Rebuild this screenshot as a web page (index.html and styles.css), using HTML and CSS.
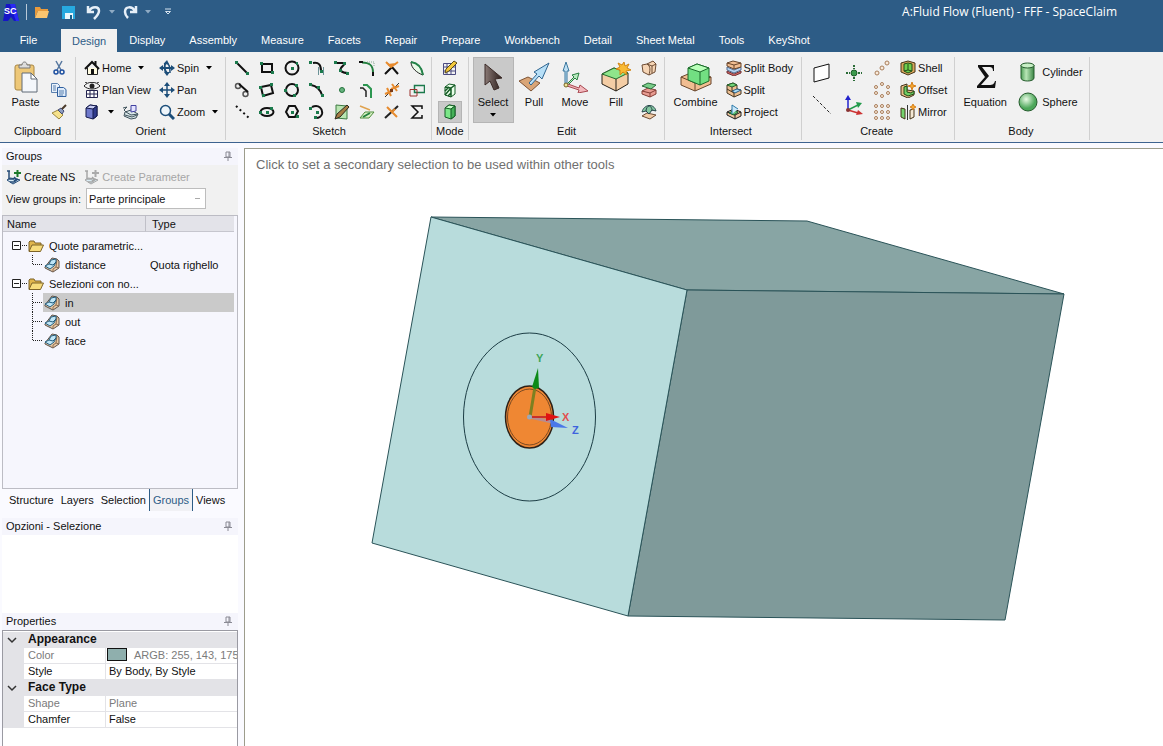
FILE: index.html
```html
<!DOCTYPE html>
<html lang="en">
<head>
  <meta charset="UTF-8">
  <meta name="viewport" content="width=device-width, initial-scale=1.0">
  <title>A:Fluid Flow (Fluent) - FFF - SpaceClaim</title>
  <link rel="stylesheet" href="styles.css">
</head>
<body>

<!-- Shared symbols -->
<svg class="sprite" aria-hidden="true">
  <symbol id="folder" viewBox="0 0 16 16">
    <path d="M1 13V4l1-1h4l1 2h6v2" fill="#e0b54b" stroke="#7d6328"/>
    <path d="M1 13.500 4 7h11.500l-3 6.500z" fill="#f7dc7c" stroke="#7d6328"/>
  </symbol>
  <symbol id="item" viewBox="0 0 16 16">
    <path d="M1 10 8 1l5 1 2 2v7l-6 4-8-4z" fill="#e9c9a4" stroke="#5d534c"/>
    <path d="m13 2-1 8 3 1M9 15v-3l3-2" fill="none" stroke="#8d6d52"/>
    <path d="m1 9 4-2 2-4 5-1v3l-2 4-4 3z" fill="#bfe6f7" stroke="#235d7e"/>
    <path d="m5 7 4 1 3-3" fill="none" stroke="#235d7e"/>
  </symbol>
  <symbol id="pin" viewBox="0 0 8 10">
    <path d="M2 1h4v5H2zM5 1v5M0 6.500h8M4 7v3" fill="none" stroke="#8a8a94"/>
  </symbol>
  <symbol id="down" viewBox="0 0 6 4"><path d="M0 0h6L3 3.500z"/></symbol>
  <symbol id="create" viewBox="0 0 16 16">
    <path d="m1 11 3-2 7 1 3 1-7 4z" fill="#d9ecf5" stroke="currentColor"/>
    <path d="M1 2h3M3 2v8h5M8 8l2 2-2 2M4 13h4l4-3" fill="none" stroke="currentColor" stroke-width="1.500"/>
  </symbol>
  <symbol id="twist" viewBox="0 0 10 8"><path d="m1 2 4 4 4-4" fill="none" stroke="#333" stroke-width="1.500"/></symbol>
</svg>

<header class="titlebar">
  <div class="quick">
    <svg class="logo" viewBox="0 0 16 18" width="16" height="18">
      <path d="M3 1h9l4 17h-5l-3-4-3 4H0z" fill="#1515c8"/>
      <path d="M7 1h5l4 17h-3z" fill="#2929f5"/>
      <text x="1" y="11" class="logo-text">SC</text>
    </svg>
    <span class="quick-line"></span>
    <button aria-label="Open"><svg viewBox="0 0 16 16" width="16" height="16"><path d="M1 14V3h5l1 2h7v2H4z" fill="#e89a3c"/><path d="M1 14 4 7h11l-2 7z" fill="#fbc56f"/></svg></button>
    <button aria-label="Save"><svg viewBox="0 0 16 16" width="16" height="16"><path d="M2 2h13v13H2z" fill="#27a9e0"/><path d="M5 9h8v6H5z" fill="#eaf6fc"/><path d="M10 11h2v4h-2z" fill="#185f8c"/></svg></button>
    <button aria-label="Undo"><svg viewBox="0 0 16 16" width="16" height="16"><path d="M2 2v6h6M3 7c3-5 10-5 10 0 0 3-2 5-5 8" fill="none" stroke="#e6eff8" stroke-width="2.500"/></svg></button>
    <svg class="caret pale" width="6" height="4"><use href="#down"/></svg>
    <button aria-label="Redo"><svg viewBox="0 0 16 16" width="16" height="16"><path d="M14 2v6H8M13 7C10 2 3 2 3 8c0 3 1 4 3 6" fill="none" stroke="#e6eff8" stroke-width="2.500"/></svg></button>
    <svg class="caret pale" width="6" height="4"><use href="#down"/></svg>
    <button class="more" aria-label="Customize toolbar"><svg viewBox="0 0 8 8" width="8" height="8"><path d="M1 1h6M1.500 3.500h5L4 6z" fill="none" stroke="#d5e2ee"/></svg></button>
  </div>
  <span class="title">A:Fluid Flow (Fluent) - FFF - SpaceClaim</span>
</header>

<nav class="tabs">
  <button class="tab file">File</button>
  <button class="tab active">Design</button>
  <button class="tab">Display</button>
  <button class="tab">Assembly</button>
  <button class="tab">Measure</button>
  <button class="tab">Facets</button>
  <button class="tab">Repair</button>
  <button class="tab">Prepare</button>
  <button class="tab">Workbench</button>
  <button class="tab">Detail</button>
  <button class="tab">Sheet Metal</button>
  <button class="tab">Tools</button>
  <button class="tab">KeyShot</button>
</nav>

<div class="ribbon">
  <section class="group clipboard">
    <div class="group-body">
      <button class="big">
        <svg viewBox="0 0 26 32" width="26" height="32">
          <rect x="2" y="4" width="19" height="25" rx="2" fill="#eec878" stroke="#a88643"/>
          <path d="M6 7V4h3c0-4 5-4 5 0h3v3z" fill="#ddd" stroke="#777"/>
          <path d="M9 12h9l6 6v13H9z" fill="#f4f7fb" stroke="#606a76"/>
          <path d="M18 12v6h6z" fill="#fff" stroke="#606a76"/>
        </svg>
        Paste
      </button>
      <div class="stack">
        <button aria-label="Cut"><svg viewBox="0 0 16 16" width="16" height="16"><path d="m5 1 5 9M11 1 6 10" stroke="#56779f" stroke-width="1.500"/><circle cx="5" cy="12" r="2" fill="none" stroke="#1e50a0" stroke-width="1.500"/><circle cx="11" cy="12" r="2" fill="none" stroke="#1e50a0" stroke-width="1.500"/></svg></button>
        <button aria-label="Copy"><svg viewBox="0 0 16 16" width="16" height="16"><path d="M.500 1.500h6l2 2v7h-8z" fill="#e8f1fb" stroke="#5b80ae"/><path d="M6.500 5.500h6l2.500 2v7H6.500z" fill="#dceafa" stroke="#2f5f9f"/><path d="M2 4h3M2 6h3M2 8h3M8 9h5M8 11h5M8 13h4" stroke="#5b80ae"/></svg></button>
        <button aria-label="Format painter"><svg viewBox="0 0 16 16" width="16" height="16"><path d="m1 9 6-3 5 5-4 4z" fill="#f6e28b" stroke="#9a8640"/><path d="m7 6 3-2 3 3-2 3z" fill="#8d9cc0" stroke="#424a70"/><path d="m11 5 4-4" stroke="#4a3a2a" stroke-width="2"/></svg></button>
      </div>
    </div>
    <div class="group-name">Clipboard</div>
  </section>

  <section class="group orient">
    <div class="group-body">
      <button class="row"><svg viewBox="0 0 16 16" width="16" height="16"><path d="M3.500 8v6.500h10V8" fill="#fffbe0" stroke="#222"/><path d="m1 9 7-7 7 7M11.500 1v4" fill="none" stroke="#111" stroke-width="2"/><path d="M7 9h3v5H7z" fill="#111"/></svg>Home <svg class="caret far" width="6" height="4"><use href="#down"/></svg></button>
      <button class="row"><svg viewBox="0 0 16 16" width="16" height="16"><path d="M2 8h12M7 2c-2 3-2 9 1 11" fill="none" stroke="#1d4e79" stroke-width="2"/><path d="M5 4c5-2 6 2 6 9" fill="none" stroke="#1d4e79" stroke-width="1.500"/><path d="m5 4 3-4 2 4zM0 8l4-3v6zM16 8l-4-3v6zM5 12l3 4 3-4z" fill="#1d4e79"/></svg>Spin <svg class="caret far" width="6" height="4"><use href="#down"/></svg></button>
      <button class="row"><svg viewBox="0 0 16 16" width="16" height="16"><path d="M0 4c4-5 12-5 16 0-4 4-12 4-16 0zM3 1 1 0M8 1V0M13 1l2-1" fill="none" stroke="#222"/><circle cx="8" cy="4" r="2.500" fill="#222"/><path d="M2.500 8.500h11v7h-11zM2 12h12M6 8v8M10 8v8" fill="#fff" stroke="#23234e"/></svg>Plan View</button>
      <button class="row"><svg viewBox="0 0 16 16" width="16" height="16"><path d="M8 2v12M2 8h12" stroke="#1d4e79" stroke-width="1.500"/><path d="m5 4 3-4 3 4zM5 12l3 4 3-4zM4 5 0 8l4 3zM12 5l4 3-4 3z" fill="#1d4e79"/></svg>Pan</button>
      <div class="pair">
        <button aria-label="View cube"><svg viewBox="0 0 16 16" width="16" height="16"><path d="m2 4 4-3 7 1v10l-4 3-7-2z" fill="#6f79cb" stroke="#151b4d"/><path d="m2 4 7 1 4-3-7-1z" fill="#c6cbf2" stroke="#151b4d"/><path d="M9 5v10l4-3V2z" fill="#2f3a8c" stroke="#151b4d"/></svg></button>
        <svg class="caret" width="6" height="4"><use href="#down"/></svg>
        <button aria-label="Snap view"><svg viewBox="0 0 18 16" width="18" height="16"><path d="m3 8 6-2 7 4-2 4-5 1-7-3z" fill="#d9e6e8" stroke="#40535c"/><path d="m1 4 4-1-3 3 2 2 5 3 7-1M3 11l7 2 5-2" fill="none" stroke="#40535c"/><path d="M9 1.500h5V7l-5 1z" fill="#e4e4ff" stroke="#4040a0"/></svg></button>
      </div>
      <button class="row"><svg viewBox="0 0 16 16" width="16" height="16"><circle cx="6.500" cy="6.500" r="5" fill="#eef5fa" stroke="#1d4e79" stroke-width="1.500"/><path d="m10 10 5 5" stroke="#1d4e79" stroke-width="3"/></svg>Zoom <svg class="caret far" width="6" height="4"><use href="#down"/></svg></button>
    </div>
    <div class="group-name">Orient</div>
  </section>

  <section class="group sketch">
    <div class="group-body">
      <button aria-label="Line"><svg viewBox="0 0 16 16" width="16" height="16"><path d="m3 3 10 10" stroke="#111" stroke-width="2"/><path d="M1 1h3v3H1zM12 12h3v3h-3z" fill="#1b7a4c"/></svg></button>
      <button aria-label="Rectangle"><svg viewBox="0 0 16 16" width="16" height="16"><path d="M3 4h10v8H3z" fill="none" stroke="#111" stroke-width="2"/><path d="M1 2h3v3H1zM12 11h3v3h-3z" fill="#1b7a4c"/></svg></button>
      <button aria-label="Circle"><svg viewBox="0 0 16 16" width="16" height="16"><circle cx="8" cy="8" r="6.500" fill="none" stroke="#111" stroke-width="2"/><path d="M7 7h3v3H7zM12 2h2v3h-2z" fill="#1b7a4c"/></svg></button>
      <button aria-label="Tangent line"><svg viewBox="0 0 16 16" width="16" height="16"><path d="M4 3c6-1 8 2 8 8" fill="none" stroke="#111" stroke-width="2"/><path d="M9.500 7v8M14.500 7v8" stroke="#6b9297"/><path d="M0 1h3v3H0zM11 10h3v3h-3z" fill="#1b7a4c"/></svg></button>
      <button aria-label="Spline"><svg viewBox="0 0 16 16" width="16" height="16"><path d="M2 3h8c3 1-6 5-3 8 2 2 4 2 7 2" fill="none" stroke="#111" stroke-width="2"/><path d="M0 1h3v3H0zM9 2h3v3H9zM5 9h3v3H5zM12 12h3v3h-3z" fill="#1b7a4c"/></svg></button>
      <button aria-label="Rounded corner"><svg viewBox="0 0 16 16" width="16" height="16"><path d="M3 2.500c8 0 11 3 11 10" fill="none" stroke="#23803f" stroke-width="2"/><path d="M0 2h4M14 12v4" stroke="#111" stroke-width="2"/><path d="M8 2h7v5" fill="none" stroke="#8aa894" stroke-dasharray="1 1"/></svg></button>
      <button aria-label="Trim away"><svg viewBox="0 0 16 16" width="16" height="16"><path d="m1 14 7-7 6 7" fill="none" stroke="#111" stroke-width="2"/><path d="m2 2 5 5 7-5M4 5l8-1" fill="none" stroke="#e78b2e" stroke-width="2"/></svg></button>
      <button aria-label="Project to sketch"><svg viewBox="0 0 16 16" width="16" height="16"><path d="M2 2c0 6 6 11 12 13C13 8 9 3 2 2z" fill="#eafae9" stroke="#222"/><path d="M2 2c7 1 11 6 12 13" fill="none" stroke="#238349" stroke-width="2"/></svg></button>

      <button aria-label="Tangent arc line"><svg viewBox="0 0 16 16" width="16" height="16"><circle cx="4" cy="4" r="2.500" fill="none" stroke="#555" stroke-width="1.500"/><circle cx="11.500" cy="12" r="2.500" fill="none" stroke="#555" stroke-width="1.500"/><path d="m5 2 9 8" stroke="#111" stroke-width="2"/></svg></button>
      <button aria-label="Three-point rectangle"><svg viewBox="0 0 16 16" width="16" height="16"><path d="m2 5 10-2 2 8-10 3z" fill="none" stroke="#111" stroke-width="2"/><path d="M0 4h3v3H0zM11 1h3v3h-3zM3 12h3v3H3z" fill="#1b7a4c"/></svg></button>
      <button aria-label="Three-point circle"><svg viewBox="0 0 16 16" width="16" height="16"><circle cx="8" cy="8" r="6" fill="none" stroke="#111" stroke-width="2"/><path d="M0 7h3v3H0zM11 2h3v3h-3zM9 12h3v3H9z" fill="#1b7a4c"/></svg></button>
      <button aria-label="Tangent arc"><svg viewBox="0 0 16 16" width="16" height="16"><path d="M2 3c6 1 9 4 11 10" fill="none" stroke="#111" stroke-width="2"/><path d="M0 1h3v3H0zM8 4h3v3H8zM12 12h3v3h-3z" fill="#1b7a4c"/></svg></button>
      <button aria-label="Point"><svg viewBox="0 0 16 16" width="16" height="16"><circle cx="8" cy="8" r="2.500" fill="#67b37e" stroke="#23733c"/></svg></button>
      <button aria-label="Offset curve"><svg viewBox="0 0 16 16" width="16" height="16"><path d="M1 6h3l3 3v6" fill="none" stroke="#222" stroke-width="1.500"/><path d="M4 3h4l4 4v9" fill="none" stroke="#2c9650" stroke-width="2"/></svg></button>
      <button aria-label="Split curve"><svg viewBox="0 0 16 16" width="16" height="16"><path d="M1 15 15 1" stroke="#333"/><path d="m3 6 4 8M1 12l7-3M8 2l5 7M7 7l8-3" stroke="#e78b2e" stroke-width="2"/><path d="M6 7h3v3H6z" fill="#7a3b16"/></svg></button>
      <button aria-label="Scale"><svg viewBox="0 0 16 16" width="16" height="16"><path d="M5.500 3.500h10v7h-10z" fill="none" stroke="#1b7a4c" stroke-width="1.500"/><path d="M1 7.500h7V14H1z" fill="none" stroke="#9b302c"/></svg></button>

      <button aria-label="Construction line"><svg viewBox="0 0 16 16" width="16" height="16"><path d="m2 2 13 12" stroke="#111" stroke-width="2" stroke-dasharray="2 3"/></svg></button>
      <button aria-label="Ellipse"><svg viewBox="0 0 16 16" width="16" height="16"><ellipse cx="8" cy="8" rx="6.500" ry="4" fill="none" stroke="#111" stroke-width="2"/><path d="M7 7h3v3H7zM0 7h3v3H0zM11 3h3v3h-3z" fill="#1b7a4c"/></svg></button>
      <button aria-label="Polygon"><svg viewBox="0 0 16 16" width="16" height="16"><path d="m2 8 3-6h6l3 5-3 6H5z" fill="none" stroke="#111" stroke-width="2"/><path d="M7 7h3v3H7zM12 11h3v3h-3z" fill="#1b7a4c"/></svg></button>
      <button aria-label="Sweep arc"><svg viewBox="0 0 16 16" width="16" height="16"><path d="M3 3c7-3 11 2 10 7-1 3-3 4-6 4" fill="none" stroke="#111" stroke-width="2"/><path d="M0 3h3v3H0zM7 7h3v3H7zM5 12h3v3H5z" fill="#1b7a4c"/></svg></button>
      <button aria-label="Face curve"><svg viewBox="0 0 16 16" width="16" height="16"><path d="m2 1 11 1v13l-11-1z" fill="#b8e4b0" stroke="#3d7a42"/><path d="m1 15 2-5L13 1l2 2-9 10z" fill="#a57c43" stroke="#2d2a20"/></svg></button>
      <button aria-label="Project curve"><svg viewBox="0 0 16 16" width="16" height="16"><path d="m1 14 5-6h9l-5 6z" fill="#dcf3c6" stroke="#4d8c3d"/><path d="m4 13 7-4" stroke="#23803f" stroke-width="2"/><path d="m1 2 10 4" stroke="#e0a24e" stroke-width="1.500"/></svg></button>
      <button aria-label="Trim"><svg viewBox="0 0 16 16" width="16" height="16"><path d="M1 14 14 2" fill="none" stroke="#222" stroke-width="2"/><path d="m3 3 10 10M8 8l3-3" fill="none" stroke="#e78b2e" stroke-width="2"/></svg></button>
      <button aria-label="Equation curve"><svg viewBox="0 0 16 16" width="16" height="16"><path d="M13 5V2H3l6 6-6 6h10v-3" fill="none" stroke="#111" stroke-width="1.500"/></svg></button>
    </div>
    <div class="group-name">Sketch</div>
  </section>

  <section class="group mode">
    <div class="group-body">
      <button aria-label="Sketch mode"><svg viewBox="0 0 16 16" width="16" height="16"><path d="M1.500 3.500h12v11h-12zM1 7h13M1 11h13M5 3v12M9 3v12" fill="none" stroke="#4b4b80"/><path d="m3 13 1-4 8-8 3 2-8 8z" fill="#f3c93e" stroke="#5b4b17"/></svg></button>
      <button aria-label="Section mode"><svg viewBox="0 0 16 16" width="16" height="16"><path d="m3 5 4-3 6 1v9l-4 3-6-2z" fill="#eaffea" stroke="#155c26"/><path d="m3 5 6 1 4-3M9 6v9M3 9l4-4M3 13l6-7M6 14l3-3" fill="none" stroke="#155c26" stroke-width="1.500"/></svg></button>
      <button class="on" aria-label="3D mode"><svg viewBox="0 0 16 16" width="16" height="16"><path d="m3 4 4-3 6 1v10l-4 3-6-2z" fill="#7be688" stroke="#155c26"/><path d="m3 4 6 1 4-3-6-1z" fill="#c7ffc8" stroke="#155c26"/><path d="M9 5v10l4-3V2z" fill="#45b158" stroke="#155c26"/></svg></button>
    </div>
    <div class="group-name">Mode</div>
  </section>

  <section class="group edit">
    <div class="group-body">
      <button class="big on">
        <svg viewBox="0 0 32 32" width="32" height="32"><defs><linearGradient id="arrow"><stop offset="0" stop-color="#8a7a76"/><stop offset="1" stop-color="#2a1c1a"/></linearGradient></defs><path d="M8 3v21l5-4 4 9 5-2-4-9 7-1z" fill="url(#arrow)" stroke="#3b2b28"/></svg>
        Select
        <svg class="caret" width="6" height="4"><use href="#down"/></svg>
      </button>
      <button class="big">
        <svg viewBox="0 0 32 32" width="32" height="32"><path d="m1 20 9-4 12 6-9 8z" fill="#d9a577" stroke="#7e5334"/><path d="m11 22 8-9-3-2 15-9-7 16-3-3-8 9z" fill="#b7dff7" stroke="#2f6590"/></svg>
        Pull
      </button>
      <button class="big">
        <svg viewBox="0 0 32 32" width="32" height="32"><path d="M6 24V10H4L7 1l3 9H8v14" fill="#bfe0f4" stroke="#3b769d"/><path d="m8 23 7-7-2-2 7-2-2 7-2-2-7 7" fill="#b9ebc0" stroke="#2b7f42"/><path d="m9 23 11 4 1-3 8 6-10 2 1-3-12-4" fill="#f3b8bd" stroke="#a84850"/><circle cx="7" cy="24" r="2" fill="#f3e59a" stroke="#776424"/></svg>
        Move
      </button>
      <button class="big">
        <svg viewBox="0 0 32 32" width="32" height="32"><path d="m2 13 12-6 14 5v11l-12 7-14-7z" fill="#f4cda5" stroke="#272018"/><path d="m2 13 12-6 14 5-12 6z" fill="#8fe58b" stroke="#236b2d"/><path d="M16 18v12" stroke="#272018"/><path d="m24 1 1 4 4-2-2 4 4 2-5 1 1 4-4-3-3 3v-5l-4-1 4-2-2-4 4 2z" fill="#f9ba34" stroke="#d18514"/></svg>
        Fill
      </button>
      <div class="stack">
        <button aria-label="Blend"><svg viewBox="0 0 16 16" width="16" height="16"><path d="m1 5 5-1 6-3 3 3-1 8-6 3-6-3z" fill="#f6d5b5" stroke="#6d4c34"/><path d="M6 4c4 2 3 7 2 11M6 4l5 2 4-2M11 6v7" fill="none" stroke="#6d4c34"/></svg></button>
        <button aria-label="Replace"><svg viewBox="0 0 16 16" width="16" height="16"><path d="m1 9 6-3 8 2v4l-6 3-8-3z" fill="#e99c92" stroke="#833d35"/><path d="m1 4 6-3 8 2-5 4z" fill="#7ace8a" stroke="#286b3a"/><path d="m1 9 8 2 6-3M9 11v4" fill="none" stroke="#833d35"/></svg></button>
        <button aria-label="Tweak"><svg viewBox="0 0 16 16" width="16" height="16"><path d="m1 12 5-3 9 2-6 4z" fill="#f1cba6" stroke="#6d4c34"/><path d="M1 8c2-8 12-9 14-1l-4-1-3 4-3-3z" fill="#84c7a0" stroke="#27444a"/><path d="M5 7c0-3 2-5 3-5s3 1 3 5" fill="none" stroke="#27444a"/></svg></button>
      </div>
    </div>
    <div class="group-name">Edit</div>
  </section>

  <section class="group intersect">
    <div class="group-body">
      <button class="big">
        <svg viewBox="0 0 32 32" width="32" height="32"><path d="m1 16 12-5 18 5v7l-16 7-14-6z" fill="#f1bd91" stroke="#68452b"/><path d="m1 16 14 6v8M15 22l16-6" fill="none" stroke="#68452b"/><path d="m8 7 9-4 12 4v13l-9 4-12-5z" fill="#72df82" stroke="#1b6b2a"/><path d="m8 7 12 4 9-4-12-4z" fill="#b9ffb9" stroke="#1b6b2a"/><path d="M20 11v13" stroke="#1b6b2a"/></svg>
        Combine
      </button>
      <div class="stack wide">
        <button class="row"><svg viewBox="0 0 16 16" width="16" height="16"><path d="m1 11 7 3 7-3v2l-7 3-7-3z" fill="#d66561" stroke="#703538"/><path d="m1 7 7 3 7-3v3l-7 3-7-3z" fill="#b5d4f1" stroke="#536b8f"/><path d="m1 3 6-2 8 2v4l-7 2-7-3z" fill="#f1bd91" stroke="#68452b"/><path d="m1 3 7 2 7-2M8 5v4" fill="none" stroke="#68452b"/></svg>Split Body</button>
        <button class="row"><svg viewBox="0 0 16 16" width="16" height="16"><path d="m1 3 6-2 4 2v4l4 1v4l-7 3-7-4z" fill="#edbf91" stroke="#433422"/><path d="m1 3 6-2 4 2-5 2z" fill="#70d278" stroke="#235e2b"/><path d="m6 9 5-2 4 1-6 3z" fill="#a8dcf6" stroke="#295d86"/><path d="M1 7l7 4v4M6 5v4" fill="none" stroke="#433422"/></svg>Split</button>
        <button class="row"><svg viewBox="0 0 16 16" width="16" height="16"><path d="m1 8 7-3 7 3v4l-6 3-8-4z" fill="#f0c49c" stroke="#202020"/><path d="m1 8 8 3 6-3M9 11v4" fill="none" stroke="#202020"/><path d="m3 9 5-3 4 2-4 3z" fill="#66c47b" stroke="#185f32"/><path d="M6 10V1l6 4" fill="#c9e7fa" stroke="#2a78a8"/></svg>Project</button>
      </div>
    </div>
    <div class="group-name">Intersect</div>
  </section>

  <section class="group create">
    <div class="group-body">
      <div class="quad">
        <button aria-label="Plane"><svg viewBox="0 0 20 20" width="20" height="20"><path d="m2 5 15-4v14L2 19z" fill="#fff" stroke="#111"/></svg></button>
        <button aria-label="Origin point"><svg viewBox="0 0 16 16" width="16" height="16"><circle cx="8" cy="8" r="3" fill="#3c9a4c" stroke="#1c5c28"/><path d="M8 0v4M8 12v4M0 8h4M12 8h4" stroke="#2b6c37" stroke-width="2" stroke-dasharray="2 1"/></svg></button>
        <button aria-label="Axis"><svg viewBox="0 0 20 20" width="20" height="20"><path d="m1 1 18 18" stroke="#222" stroke-dasharray="3 2"/></svg></button>
        <button aria-label="Origin"><svg viewBox="0 0 18 20" width="18" height="20"><path d="M3 15V3" stroke="#22c" stroke-width="1.500"/><path d="m0 5 3-5 3 5z" fill="#22c"/><path d="m3 15 10-5" stroke="#239b4b" stroke-width="1.500"/><path d="m11 7 6 1-4 5z" fill="#239b4b"/><path d="m3 15 10 3" stroke="#c33" stroke-width="1.500"/><path d="m13 15 5 4-7 1z" fill="#c33"/><circle cx="3" cy="15" r="2" fill="#833"/></svg></button>
      </div>
      <div class="stack">
        <button aria-label="Linear pattern"><svg viewBox="0 0 16 16" width="16" height="16"><g fill="#f9eadb" stroke="#a87e5b"><circle cx="3" cy="13" r="2"/><circle cx="8" cy="8" r="2"/><circle cx="13" cy="3" r="2"/></g></svg></button>
        <button aria-label="Circular pattern"><svg viewBox="0 0 16 16" width="16" height="16"><g fill="#f9eadb" stroke="#a87e5b"><circle cx="8" cy="2" r="1.500"/><circle cx="8" cy="14" r="1.500"/><circle cx="2" cy="5" r="1.500"/><circle cx="14" cy="5" r="1.500"/><circle cx="2" cy="11" r="1.500"/><circle cx="14" cy="11" r="1.500"/></g></svg></button>
        <button aria-label="Fill pattern"><svg viewBox="0 0 16 16" width="16" height="16"><g fill="#f9eadb" stroke="#a87e5b"><circle cx="2" cy="2" r="1.500"/><circle cx="8" cy="2" r="1.500"/><circle cx="14" cy="2" r="1.500"/><circle cx="2" cy="8" r="1.500"/><circle cx="8" cy="8" r="1.500"/><circle cx="14" cy="8" r="1.500"/><circle cx="2" cy="14" r="1.500"/><circle cx="8" cy="14" r="1.500"/><circle cx="14" cy="14" r="1.500"/></g></svg></button>
      </div>
      <div class="stack wide">
        <button class="row"><svg viewBox="0 0 16 16" width="16" height="16"><path d="m1 3 7-2 7 2v9l-7 3-7-3z" fill="#d9a55c" stroke="#46351a"/><path d="m4 4 4-1 4 1v7l-4 2-4-2z" fill="#6fce4e" stroke="#234d17"/><path d="M8 4v6l-4 1M8 10l4 1" fill="none" stroke="#234d17"/></svg>Shell</button>
        <button class="row"><svg viewBox="0 0 16 16" width="16" height="16"><path d="m1 4 6-2v6l7 1v4l-6 3-7-3z" fill="#e7bb86" stroke="#46351a"/><path d="m4 5 3-1v6l4 1 3-2v3l-6 2-4-2z" fill="#70ce64" stroke="#234d17"/><path d="m12 0 1 3 3 1-3 1-1 3-1-3-3-1 3-1z" fill="#f6a72e" stroke="#d4801c"/></svg>Offset</button>
        <button class="row"><svg viewBox="0 0 16 16" width="16" height="16"><path d="m1 4 4 1v10l-4-2z" fill="#75d36e" stroke="#46351a"/><path d="M7.500 1v15" stroke="#333"/><path d="m10 6 4-1v8l-4 2z" fill="#f4e8d5" stroke="#46351a"/><path d="m13 0 1 2 2 1-2 1-1 2-1-2-2-1 2-1z" fill="#f6a72e" stroke="#d4801c"/></svg>Mirror</button>
      </div>
    </div>
    <div class="group-name">Create</div>
  </section>

  <section class="group bodies">
    <div class="group-body">
      <button class="big">
        <svg viewBox="0 0 32 32" width="32" height="32"><path d="M9 4h16v6h-1c0-3-1-4-4-4h-7l7 9-8 9h8c4 0 5-1 6-4h1l-1 7H8v-2l8-9-7-10z" fill="#111"/></svg>
        Equation
      </button>
      <div class="stack tall">
        <button class="row"><svg viewBox="0 0 20 20" width="20" height="20"><defs><linearGradient id="tube"><stop offset="0" stop-color="#4f9f57"/><stop offset=".4" stop-color="#b9e6b6"/><stop offset="1" stop-color="#3b8645"/></linearGradient></defs><path d="M3 3v13c0 4 13 4 13 0V3z" fill="url(#tube)" stroke="#255c2d"/><ellipse cx="9.500" cy="3.500" rx="6.500" ry="2.500" fill="#c7efc5" stroke="#255c2d"/></svg>Cylinder</button>
        <button class="row"><svg viewBox="0 0 20 20" width="20" height="20"><defs><radialGradient id="ball" cx=".4" cy=".35"><stop offset="0" stop-color="#eafbe6"/><stop offset="1" stop-color="#4da75a"/></radialGradient></defs><circle cx="10" cy="10" r="9" fill="url(#ball)" stroke="#255c2d"/></svg>Sphere</button>
      </div>
    </div>
    <div class="group-name">Body</div>
  </section>
</div>

<main class="workspace">
  <aside class="side">
    <h2 class="panel-head">Groups <svg width="8" height="10"><use href="#pin"/></svg></h2>
    <div class="group-tools">
      <div class="create-row">
        <button class="row"><svg class="blue" viewBox="0 0 16 16" width="16" height="16"><use href="#create"/><path d="M8 4h7M11.500 1v7" stroke="#1d7a2c" stroke-width="2"/></svg>Create NS</button>
        <button class="row" disabled><svg viewBox="0 0 16 16" width="16" height="16"><use href="#create"/><path d="M8 4h7M11.500 1v7" stroke="#aaa" stroke-width="2"/></svg>Create Parameter</button>
      </div>
      <div class="view-row">
        <label for="viewIn">View groups in:</label>
        <select id="viewIn"><option>Parte principale</option></select>
      </div>
    </div>

    <div class="tree">
      <table>
        <thead>
          <tr><th class="col-name">Name</th><th>Type</th></tr>
        </thead>
        <tbody>
          <tr>
            <td><div class="cell"><svg width="25" height="19"><path d="M9.500 5.500h8v8h-8z" fill="#fff" stroke="#222"/><path d="M11 9.500h5" stroke="#222"/><path d="M19 9.500h6" stroke="#222" stroke-dasharray="1 1"/></svg><span class="node"><svg width="16" height="16"><use href="#folder"/></svg>Quote parametric...</span></div></td>
            <td></td>
          </tr>
          <tr>
            <td><div class="cell"><svg width="40" height="19"><path d="M29.500 0v9.500H40" fill="none" stroke="#222" stroke-dasharray="1 1"/></svg><span class="node leaf"><svg width="18" height="16"><use href="#item"/></svg>distance</span></div></td>
            <td>Quota righello</td>
          </tr>
          <tr>
            <td><div class="cell"><svg width="25" height="19"><path d="M9.500 5.500h8v8h-8z" fill="#fff" stroke="#222"/><path d="M11 9.500h5" stroke="#222"/><path d="M19 9.500h6" stroke="#222" stroke-dasharray="1 1"/></svg><span class="node"><svg width="16" height="16"><use href="#folder"/></svg>Selezioni con no...</span></div></td>
            <td></td>
          </tr>
          <tr class="picked">
            <td><div class="cell"><svg width="40" height="19"><path d="M29.500 0v19M30 9.500h10" fill="none" stroke="#222" stroke-dasharray="1 1"/></svg><span class="node leaf"><svg width="18" height="16"><use href="#item"/></svg>in</span></div></td>
            <td></td>
          </tr>
          <tr>
            <td><div class="cell"><svg width="40" height="19"><path d="M29.500 0v19M30 9.500h10" fill="none" stroke="#222" stroke-dasharray="1 1"/></svg><span class="node leaf"><svg width="18" height="16"><use href="#item"/></svg>out</span></div></td>
            <td></td>
          </tr>
          <tr>
            <td><div class="cell"><svg width="40" height="19"><path d="M29.500 0v9.500H40" fill="none" stroke="#222" stroke-dasharray="1 1"/></svg><span class="node leaf"><svg width="18" height="16"><use href="#item"/></svg>face</span></div></td>
            <td></td>
          </tr>
        </tbody>
      </table>
    </div>

    <div class="side-tabs">
      <button>Structure</button>
      <button>Layers</button>
      <button>Selection</button>
      <button class="active">Groups</button>
      <button>Views</button>
    </div>

    <h2 class="panel-head">Opzioni - Selezione <svg width="8" height="10"><use href="#pin"/></svg></h2>
    <div class="options"></div>

    <h2 class="panel-head">Properties <svg width="8" height="10"><use href="#pin"/></svg></h2>
    <div class="props">
      <table>
        <colgroup><col class="col-gutter"><col class="col-key"><col></colgroup>
        <tbody>
          <tr><td class="gutter"><svg width="10" height="8"><use href="#twist"/></svg></td><th colspan="2">Appearance</th></tr>
          <tr class="muted"><td class="gutter"></td><td class="key">Color</td><td><span class="swatch"></span>ARGB: 255, 143, 175</td></tr>
          <tr><td class="gutter"></td><td class="key">Style</td><td>By Body, By Style</td></tr>
          <tr><td class="gutter"><svg width="10" height="8"><use href="#twist"/></svg></td><th colspan="2">Face Type</th></tr>
          <tr class="muted"><td class="gutter"></td><td class="key">Shape</td><td>Plane</td></tr>
          <tr><td class="gutter"></td><td class="key">Chamfer</td><td>False</td></tr>
        </tbody>
      </table>
    </div>
  </aside>

  <div class="view">
    <p class="hint">Click to set a secondary selection to be used within other tools</p>
    <svg class="scene" viewBox="245 149 918 597">
      <g stroke="#2a5358" stroke-linejoin="round">
        <path d="M431 217 807 221 1064 294 687 290z" fill="#88a5a4"/>
        <path d="M687 290 1064 294 1005 620 628 616z" fill="#7f9a9a"/>
        <path d="M431 217 687 290 628 616 372 543z" fill="#b8dcdc"/>
      </g>
      <ellipse cx="529.500" cy="417" rx="66" ry="84" fill="none" stroke="#1c3d45"/>
      <ellipse cx="529.500" cy="417" rx="24" ry="31" fill="#ef8733" stroke="#2d2118" stroke-width="1.500"/>
      <ellipse cx="529.500" cy="417" rx="22" ry="28" fill="none" stroke="#7b4a22"/>
      <!-- axis triad -->
      <path d="m530 417 5-30" stroke="#7d8020" stroke-width="3"/>
      <path d="m538 368-6 19 3 2 4-1z" fill="#0c8a17"/>
      <path d="m530 417 22 5" stroke="#b98c8c" stroke-width="3"/>
      <path d="m550 419 18 9-17-1z" fill="#4a78e8"/>
      <path d="m530 417 18 0" stroke="#c9302a" stroke-width="2"/>
      <path d="m546 413 14 4-14 4z" fill="#e01212"/>
      <circle cx="529.500" cy="417" r="2.500" fill="#9ba7b8"/>
      <text x="536" y="362" class="axis" fill="#3fa558">Y</text>
      <text x="562" y="421" class="axis" fill="#e2504f">X</text>
      <text x="572" y="434" class="axis" fill="#3d63de">Z</text>
    </svg>
  </div>
</main>

</body>
</html>
```
FILE: styles.css
```css
* {
  box-sizing: border-box;
}
body {
  margin: 0;
  height: 100vh;
  display: flex;
  flex-direction: column;
  overflow: hidden;
  font-family: "Liberation Sans", Arial, sans-serif;
  font-size: 11px;
  line-height: 14px;
  color: #111;
  background-color: #fafaff;
}
svg {
  display: block;
  flex: none;
}
button {
  display: flex;
  align-items: center;
  justify-content: center;
  margin: 0;
  padding: 0;
  border: 0;
  background: none;
  font: inherit;
  color: inherit;
  white-space: nowrap;
}
.sprite {
  position: absolute;
  width: 0;
  height: 0;
}

/* title bar */
.titlebar {
  display: flex;
  align-items: center;
  height: 29px;
  padding: 0 46px 6px 3px;
  background-color: #2d5c86;
  color: #fff;
}
.quick {
  display: flex;
  align-items: center;
  gap: 7px;
}
.quick-line {
  width: 1px;
  height: 16px;
  background-color: #b9c9d8;
}
.quick button + button {
  margin-left: 3px;
}
.quick .more {
  margin-left: 6px;
}
.logo-text {
  font-size: 9px;
  font-weight: bold;
  fill: #fff;
}
.caret.pale {
  fill: #8fabc4;
}
.title {
  margin-left: auto;
  font-family: "Open Sans", sans-serif;
  font-size: 12px;
}

/* ribbon tabs */
.tabs {
  display: flex;
  height: 23px;
  padding-bottom: 1px;
  background-color: #2d5c86;
  color: #fff;
}
.tab {
  padding: 0 12px;
}
.tab.file {
  width: 57px;
  margin-right: 4px;
}
.tab.active {
  height: 23px;
  padding: 0 11px;
  background-color: #f1f1f1;
  color: #2d5c86;
}

/* ribbon */
.ribbon {
  display: flex;
  height: 91px;
  padding-top: 5px;
  background-color: #f1f1f1;
  border-bottom: 1px solid #3d6390;
}
.group {
  display: flex;
  flex-direction: column;
  height: 83px;
  padding: 0 4px;
  border-right: 1px solid #d0d0d0;
}
.group-body {
  display: flex;
  height: 67px;
}
.group-name {
  line-height: 17px;
  text-align: center;
}
.stack {
  display: grid;
  grid-template-rows: repeat(3, 22px);
  width: 24px;
}
.stack.wide {
  width: auto;
}
.stack.tall {
  width: auto;
  grid-template-rows: repeat(2, 30px);
}
.row {
  justify-content: flex-start;
  gap: 2px;
}
.stack.tall .row {
  gap: 4px;
}
.big {
  flex-direction: column;
  justify-content: flex-start;
  width: 41px;
  padding-top: 4px;
}
.big .caret {
  margin-top: 4px;
}
.big > svg:first-child {
  margin-bottom: 2px;
}
.on {
  background-color: #c9c9c9;
  outline: 1px solid #b5b5b5;
  outline-offset: -1px;
}
.clipboard .big {
  width: 43px;
}
.orient .group-body {
  display: grid;
  grid-template-columns: 75px 66px;
  grid-template-rows: repeat(3, 22px);
  padding-left: 4px;
}
.orient {
  width: 150px;
}
.caret.far {
  margin-left: 5px;
}
.pair {
  display: flex;
  align-items: center;
  gap: 8px;
}
.sketch .group-body {
  display: grid;
  grid-template-columns: repeat(8, 25px);
  grid-template-rows: repeat(3, 22px);
}
.sketch {
  padding: 0 2px 0 3px;
}
.mode .group-body {
  display: grid;
  grid-template-columns: 24px;
  grid-template-rows: repeat(3, 22px);
  justify-content: center;
}
.edit {
  padding-right: 3px;
}
.intersect .big {
  width: 54px;
}
.intersect .stack {
  padding-left: 3px;
}
.intersect {
  padding-right: 8px;
}
.quad {
  display: grid;
  grid-template-columns: repeat(2, 32px);
  grid-template-rows: repeat(2, 32px);
}
.create .stack.wide {
  padding-left: 6px;
}
.create {
  padding-right: 7px;
}
.bodies .big {
  width: 52px;
}
.bodies .stack {
  padding-left: 7px;
}
.bodies {
  padding-right: 6px;
}

/* side panels */
.workspace {
  display: flex;
  flex: 1;
  min-height: 0;
}
.side {
  display: flex;
  flex-direction: column;
  width: 238px;
  padding: 5px 0 0 2px;
}
.panel-head {
  display: flex;
  align-items: center;
  justify-content: space-between;
  height: 17px;
  margin: 0;
  padding: 0 6px 2px 4px;
  font-size: 11px;
  font-weight: normal;
  background-color: #f5f5fc;
}
.group-tools {
  height: 50px;
  padding: 0 4px;
  background-color: #f1f1f1;
}
.create-row {
  display: flex;
  gap: 9px;
  height: 23px;
}
.create-row button:disabled {
  color: #a6a6a6;
}
.blue {
  color: #274c78;
}
.view-row {
  display: flex;
  align-items: center;
  gap: 5px;
}
.view-row select {
  width: 120px;
  height: 21px;
  padding: 0 16px 0 2px;
  border: 1px solid #bdbdbd;
  appearance: none;
  font: inherit;
  color: inherit;
  background: linear-gradient(#aaa, #aaa) right 5px center / 5px 1px no-repeat #fff;
}
.tree {
  flex: 1;
  padding-right: 3px;
  background-color: #f6f6fd;
  border: 1px solid #bcbcc4;
}
table {
  width: 100%;
  table-layout: fixed;
  border-collapse: separate;
  border-spacing: 0;
}
td, th {
  padding: 0;
  font-weight: normal;
  text-align: left;
  white-space: nowrap;
}
.tree th {
  height: 16px;
  padding-left: 6px;
  background-color: #e3e3e9;
  border-bottom: 1px solid #c6c6ce;
}
.tree th.col-name {
  width: 143px;
  padding-left: 4px;
  border-right: 1px solid #c0c0c8;
}
.tree tbody::before {
  content: "";
  display: block;
  height: 4px;
}
.tree td {
  height: 19px;
}
.tree td + td {
  padding-left: 4px;
}
.cell {
  display: flex;
  height: 19px;
}
.node {
  display: flex;
  flex: 1;
  align-items: center;
  gap: 5px;
}
.node.leaf {
  gap: 4px;
}
.picked .node, .picked td + td {
  background-color: #cacaca;
}
.side-tabs {
  display: flex;
  height: 29px;
  padding: 0 0 7px 4px;
}
.side-tabs button {
  padding: 0 3px;
}
.side-tabs button.active {
  color: #2d5c86;
  background-color: #f1f1f5;
  border-left: 1px solid #2d5c86;
  border-right: 1px solid #2d5c86;
}
.side-tabs button:nth-child(-n+2) {
  margin-right: 1px;
}
.options {
  height: 78px;
  background-color: #fff;
}

/* property grid */
.props {
  height: 116px;
  padding-top: 1px;
  overflow: hidden;
  background-color: #fff;
  border: 1px solid #9a9aa2;
  border-bottom: 0;
}
.col-gutter {
  width: 21px;
}
.col-key {
  width: 82px;
}
.props td, .props th {
  height: 16px;
  line-height: 15px;
  padding-left: 4px;
  border-bottom: 1px solid #e3e3e7;
}
.props .gutter {
  background-color: #e3e3e7;
}
.props td.key {
  border-right: 1px solid #e3e3e7;
}
.props th {
  font-size: 12px;
  font-weight: bold;
  background-color: #e3e3e7;
}
.props tr > :nth-child(3) {
  padding-left: 3px;
}
.muted {
  color: #7b7b7b;
}
.swatch {
  display: inline-block;
  width: 20px;
  height: 13px;
  margin: 0 7px 0 -2px;
  vertical-align: top;
  background-color: #8fafad;
  border: 1px solid #111;
}

/* 3D view */
.view {
  position: relative;
  flex: 1;
  min-width: 0;
  margin: 5px 0 0 6px;
  background-color: #fff;
  border: 1px solid #9c9c8c;
  border-right: 0;
  border-bottom: 0;
}
.hint {
  position: absolute;
  top: 9px;
  left: 11px;
  margin: 0;
  font-size: 13px;
  color: #6f6f6f;
}
.scene {
  width: 100%;
  height: 100%;
}
.axis {
  font-size: 11px;
  font-weight: bold;
}
```
